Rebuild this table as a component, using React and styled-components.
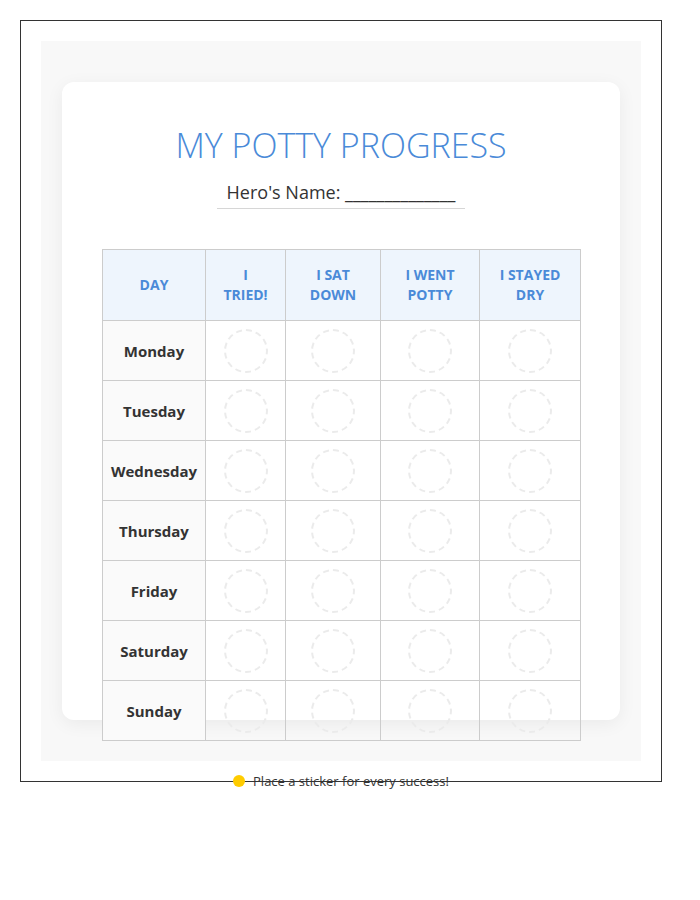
import styled, { createGlobalStyle } from 'styled-components';

const GlobalStyle = createGlobalStyle`
  body {
    margin: 0;
    background: #fff;
    font-family: 'Open Sans', 'Noto Sans', sans-serif;
    color: #333;
  }
`;

const Page = styled.div`
  padding: 20px;
`;

const Frame = styled.div`
  width: 600px;
  height: 720px;
  padding: 20px;
  border: 1px solid #333;
`;

const Sheet = styled.div`
  height: 720px;
  box-sizing: border-box;
  padding: 41px 21px;
  background: #f8f8f8;
`;

const Card = styled.div`
  height: 638px;
  box-sizing: border-box;
  padding: 40px 40px 0;
  background: #fff;
  border-radius: 12px;
  box-shadow: 0 4px 18px rgba(0, 0, 0, 0.06);
  text-align: center;
`;

const Title = styled.h1`
  margin: 0;
  font-size: 34px;
  font-weight: 300;
  letter-spacing: 0;
  color: #4a8ad8;
  line-height: 46px;
`;

const NameLine = styled.div`
  display: inline-block;
  margin-top: 12px;
  padding: 0 10px 4px;
  border-bottom: 1px solid #d6d6d6;
  font-size: 18px;
  line-height: 24px;
  color: #333;
`;

const Table = styled.table`
  margin-top: 40px;
  width: 478px;
  table-layout: fixed;
  border-collapse: collapse;
`;

const HeadCell = styled.th`
  padding: 15px 16px;
  border: 1px solid #ccc;
  background: #eef5fd;
  color: #4a8ad8;
  font-size: 14px;
  font-weight: 700;
  line-height: 20px;
  text-transform: uppercase;
`;

const DayCell = styled.td`
  height: 59px;
  padding: 0;
  border: 1px solid #ccc;
  background: #fafafa;
  font-size: 15px;
  font-weight: 700;
  color: #333;
`;

const StickerCell = styled.td`
  height: 59px;
  padding: 0;
  border: 1px solid #ccc;
  background: transparent;
`;

const Sticker = styled.div`
  width: 40px;
  height: 40px;
  margin: 0 auto;
  border: 2px dashed #ebebeb;
  border-radius: 50%;
`;

const Footer = styled.div`
  display: flex;
  align-items: center;
  justify-content: center;
  gap: 8px;
  margin-top: 11px;
  font-size: 13px;
  line-height: 18px;
  color: #333;
`;

const Dot = styled.span`
  width: 12px;
  height: 12px;
  border-radius: 50%;
  background: #ffcc00;
`;

const columns = [
  { label: 'Day', width: 103 },
  { label: 'I Tried!', width: 80 },
  { label: 'I Sat Down', width: 95 },
  { label: 'I Went Potty', width: 99 },
  { label: 'I Stayed Dry', width: 101 },
];

const days = ['Monday', 'Tuesday', 'Wednesday', 'Thursday', 'Friday', 'Saturday', 'Sunday'];

export default function App() {
  return (
    <>
      <GlobalStyle />
      <Page>
        <Frame>
          <Sheet>
            <Card>
              <Title>MY POTTY PROGRESS</Title>
              <NameLine>Hero's Name: ______________</NameLine>
              <Table>
                <colgroup>
                  {columns.map((c) => (
                    <col key={c.label} style={{ width: c.width }} />
                  ))}
                </colgroup>
                <thead>
                  <tr>
                    {columns.map((c) => (
                      <HeadCell key={c.label}>{c.label}</HeadCell>
                    ))}
                  </tr>
                </thead>
                <tbody>
                  {days.map((day) => (
                    <tr key={day}>
                      <DayCell>{day}</DayCell>
                      {columns.slice(1).map((c) => (
                        <StickerCell key={c.label}>
                          <Sticker />
                        </StickerCell>
                      ))}
                    </tr>
                  ))}
                </tbody>
              </Table>
            </Card>
          </Sheet>
          <Footer>
            <Dot />
            Place a sticker for every success!
          </Footer>
        </Frame>
      </Page>
    </>
  );
}
